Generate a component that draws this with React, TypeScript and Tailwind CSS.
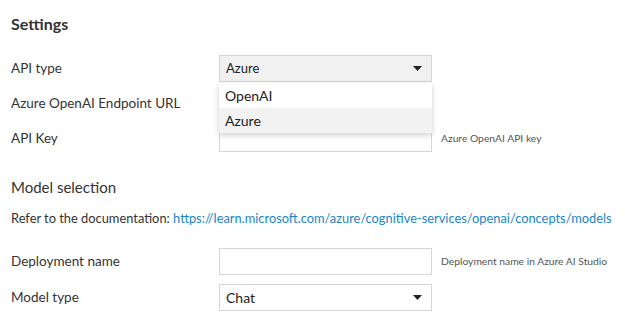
import React from 'react';

const font = { fontFamily: 'Lato, "Open Sans", sans-serif' };

const Caret = () => (
  <svg width="9" height="5" viewBox="0 0 9 5" className="shrink-0">
    <path d="M0 0h9L4.5 5z" fill="#222" />
  </svg>
);

const Row: React.FC<{ label: string; children: React.ReactNode; help?: string; className?: string }> = ({
  label,
  children,
  help,
  className = '',
}) => (
  <div className={`flex items-center ${className}`}>
    <div className="w-[208px] text-[13.5px] text-[#333]">{label}</div>
    <div className="relative w-[213px]">{children}</div>
    {help && <div className="ml-[9px] text-[10.3px] text-[#555]">{help}</div>}
  </div>
);

export default function App() {
  return (
    <div className="w-[625px] h-[329px] bg-white pl-[11px] pt-[14px] overflow-hidden" style={font}>
      <h2 className="text-[16px] font-bold text-[#333] leading-[20px]">Settings</h2>

      <Row label="API type" className="mt-[21px]">
        <div className="h-[27px] flex items-center justify-between px-[6px] pr-[9px] bg-[#f1f1f1] border border-[#d6d6d6] text-[13px] text-[#222]">
          <span>Azure</span>
          <Caret />
        </div>
        <div className="absolute left-0 right-0 top-[28px] z-10 bg-white shadow-[0_2px_6px_rgba(0,0,0,0.2)] text-[14px] text-[#222]">
          <div className="h-[25px] flex items-center px-[6px]">OpenAI</div>
          <div className="h-[25px] flex items-center px-[6px] bg-[#f2f2f2]">Azure</div>
        </div>
      </Row>

      <Row label="Azure OpenAI Endpoint URL" className="mt-[8px]">
        <div className="h-[27px] border border-[#d6d6d6]" />
      </Row>

      <Row label="API Key" help="Azure OpenAI API key" className="mt-[8px]">
        <div className="h-[27px] border border-[#d6d6d6]" />
      </Row>

      <div className="mt-[25px] text-[15px] text-[#333] leading-[20px]">Model selection</div>
      <div className="mt-[12px] text-[12.85px] text-[#333] leading-[18px]">
        Refer to the documentation:{' '}
        <a className="text-[#1a85c8]" href="#">
          https://learn.microsoft.com/azure/cognitive-services/openai/concepts/models
        </a>
      </div>

      <Row label="Deployment name" help="Deployment name in Azure AI Studio" className="mt-[21px]">
        <div className="h-[27px] border border-[#d6d6d6]" />
      </Row>

      <Row label="Model type" className="mt-[9px]">
        <div className="h-[27px] flex items-center justify-between px-[6px] pr-[9px] border border-[#d6d6d6] text-[14px] text-[#222]">
          <span>Chat</span>
          <Caret />
        </div>
      </Row>
    </div>
  );
}
